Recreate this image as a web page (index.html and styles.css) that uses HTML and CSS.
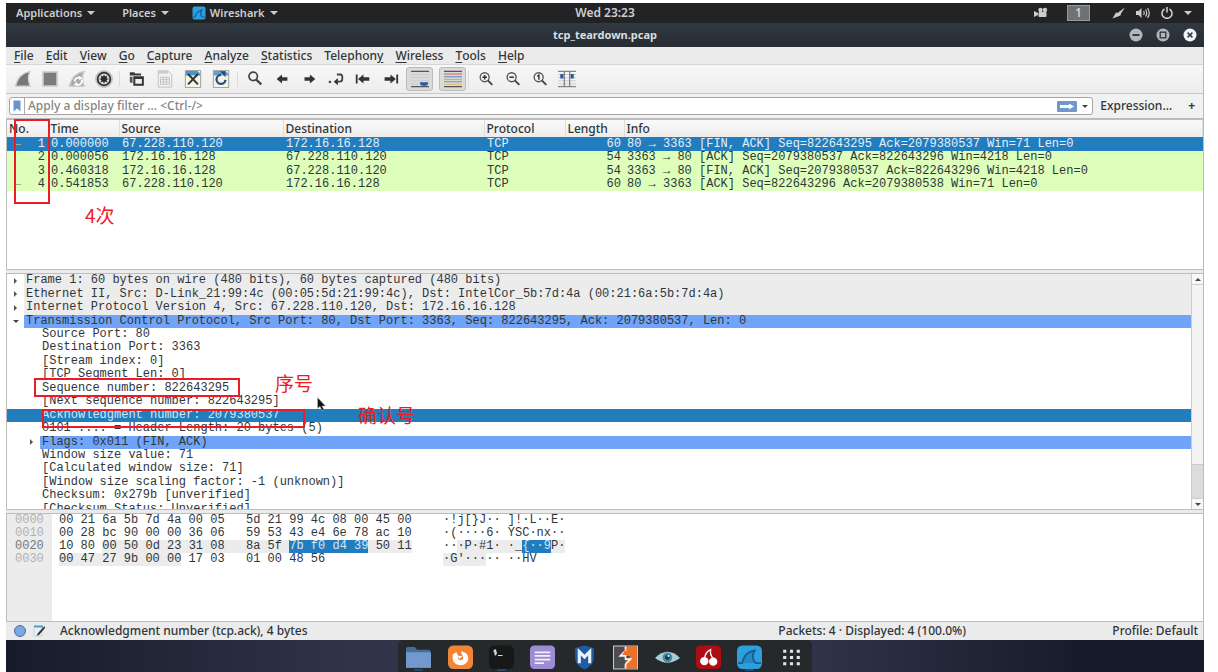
FILE: index.html
```html
<!DOCTYPE html>
<html lang="en">
<head>
<meta charset="utf-8">
<title>tcp_teardown.pcap</title>
<link rel="stylesheet" href="styles.css">
</head>
<body>
<div class="screen">
  <header class="topbar">
    <nav class="topbar-left">
      <button>Applications<i class="caret"></i></button>
      <button>Places<i class="caret"></i></button>
      <button><svg class="app-icon" viewBox="0 0 14 14"><rect x="0.5" y="0.5" width="13" height="13" rx="2" fill="#2b9fe0"/><path d="M1 11h2c1-4 3-6 7-7-1.500 2-1.500 5 0 7h3" fill="none" stroke="#145c8f" stroke-width="1.200"/></svg>Wireshark<i class="caret"></i></button>
    </nav>
    <span class="clock">Wed 23:23</span>
    <div class="topbar-right">
      <svg class="tray" viewBox="0 0 14 12"><circle cx="6.500" cy="3" r="2.200"/><circle cx="11" cy="3" r="2.200"/><rect x="4.500" y="5" width="8" height="5" rx="1"/><path d="M0 4l4 2v2L0 10z"/></svg>
      <span class="workspace">1</span>
      <svg class="tray" viewBox="0 0 14 12"><path d="M0.500 11.500L4 5.500l1.500 0.500L13 0.500 9 6.500 8.500 8.500z"/></svg>
      <svg class="tray" viewBox="0 0 14 12"><path d="M0 4h2.500l3-3v10l-3-3H0z"/><path d="M7.500 4q1.500 2 0 4M9.500 2.500q2.500 3.500 0 7M11.500 1q3.500 5 0 10" fill="none" stroke="#ccc" stroke-width="1.200"/></svg>
      <svg class="tray" viewBox="0 0 14 12"><path d="M4.500 2a5 5 0 1 0 5 0M7 0v5.500" fill="none" stroke="#d4d4d4" stroke-width="1.500"/></svg>
      <i class="caret"></i>
    </div>
  </header>
  <div class="titlebar">
    <span></span>
    <h1>tcp_teardown.pcap</h1>
    <div class="window-buttons">
      <button aria-label="Minimize"><svg viewBox="0 0 14 14"><circle cx="7" cy="7" r="6.500" fill="#b4b6b8"/><path d="M3.500 7h7" stroke="#333a42" stroke-width="2"/></svg></button>
      <button aria-label="Maximize"><svg viewBox="0 0 14 14"><circle cx="7" cy="7" r="6.500" fill="#b4b6b8"/><rect x="4.200" y="4.200" width="5.600" height="5.600" fill="none" stroke="#333a42" stroke-width="1.400"/></svg></button>
      <button aria-label="Close"><svg viewBox="0 0 14 14"><circle cx="7" cy="7" r="6.500" fill="#f4f5f6"/><path d="M4.600 4.600l4.800 4.800M9.400 4.600l-4.800 4.800" stroke="#333a42" stroke-width="1.500"/></svg></button>
    </div>
  </div>
  <main class="app">
    <nav class="menubar">
      <button><u>F</u>ile</button><button><u>E</u>dit</button><button><u>V</u>iew</button><button><u>G</u>o</button><button><u>C</u>apture</button><button><u>A</u>nalyze</button><button><u>S</u>tatistics</button><button>Telephon<u>y</u></button><button><u>W</u>ireless</button><button><u>T</u>ools</button><button><u>H</u>elp</button>
    </nav>
    <div class="toolbar">
      <div class="tools">
        <button aria-label="Start capture"><svg viewBox="0 0 20 20"><path d="M1.500 18C4 8 9 3 18 1.500 15.500 6 15.500 12 18 18z" fill="#777" stroke="#d2d2d2" stroke-width="1.500"/></svg></button>
        <button aria-label="Stop capture"><svg viewBox="0 0 20 20"><rect x="1" y="1" width="18" height="18" fill="#d4d4d4"/><rect x="3" y="3" width="14" height="14" fill="#7c7c7c"/></svg></button>
        <button aria-label="Restart capture"><svg viewBox="0 0 20 20"><path d="M1.500 18C4 8 9 3 18 1.500 15.500 6 15.500 12 18 18z" fill="#a9a9a9" stroke="#ccc" stroke-width="1.500"/><path d="M7.500 13a4 4 0 0 1 6-4M15 10.500a4 4 0 0 1-6 5" fill="none" stroke="#fff" stroke-width="2"/><path d="M12 6.500l4 2-3.500 3zM10.500 18l-4-2 3.500-3z" fill="#fff"/></svg></button>
        <button aria-label="Capture options"><svg viewBox="0 0 20 20"><circle cx="10" cy="10" r="10" fill="#c4c4c4"/><circle cx="10" cy="10" r="7" fill="#e6e6e6" stroke="#333" stroke-width="2"/><circle cx="10" cy="10" r="3.400" fill="#2d2d2d"/><path d="M10 5v10M5 10h10M6.500 6.500l7 7M13.500 6.500l-7 7" stroke="#2d2d2d" stroke-width="1.200"/></svg></button>
      </div>
      <i class="sep"></i>
      <div class="tools wide">
        <button aria-label="Open file"><svg viewBox="0 0 20 20"><path d="M2 2.500h5l1 1.500h6.500V6H2z" fill="#3b3b3b"/><path d="M2 7.500h3v7H3.500L2 13z" fill="#555"/><path d="M7 8h9.500v8.500H7z" fill="#f2f2f2" stroke="#333" stroke-width="2.200"/><path d="M7 9h9.500" stroke="#333" stroke-width="2"/></svg></button>
        <button aria-label="Save file"><svg viewBox="0 0 20 20"><path d="M2.500 1h11l4 4v14h-15z" fill="#f2f2f2" stroke="#bbb"/><path d="M2.500 1h11v3h-11z" fill="#ccc"/><path d="M5 8h10v8H5zM5 10.700h10M5 13.300h10M8.300 8v8M11.700 8v8" fill="none" stroke="#c2c2c2"/></svg></button>
        <button aria-label="Close file"><svg viewBox="0 0 20 20"><path d="M1.500 0.500h17v19h-17z" fill="#f4f5e4" stroke="#999"/><path d="M2 1h13l3 3v2H2z" fill="#4a96cc"/><path d="M4.500 4.500l11 11.500M15.500 4.500L4.500 16" stroke="#30363c" stroke-width="2.200"/></svg></button>
        <button aria-label="Reload file"><svg viewBox="0 0 20 20"><path d="M1.500 0.500h17v19h-17z" fill="#f4f5e4" stroke="#999"/><path d="M2 1h13l3 3v2H2z" fill="#5ba2d4"/><path d="M15 11a5 5 0 1 1-5-5.500" fill="none" stroke="#2c4c80" stroke-width="2.500"/><path d="M9 1.500h6V8z" fill="#2c4c80"/></svg></button>
      </div>
      <i class="sep"></i>
      <div class="tools">
        <button aria-label="Find packet"><svg viewBox="0 0 20 20"><circle cx="8" cy="7" r="4.700" fill="none" stroke="#444" stroke-width="1.900"/><path d="M11 10.500l6 5.500" stroke="#444" stroke-width="2.500"/></svg></button>
        <button aria-label="Go back"><svg viewBox="0 0 20 20"><path d="M4 10l6-5v3h6v4h-6v3z" fill="#333"/></svg></button>
        <button aria-label="Go forward"><svg viewBox="0 0 20 20"><path d="M17 10l-6-5v3H5v4h6v3z" fill="#333"/></svg></button>
        <button aria-label="Go to packet"><svg viewBox="0 0 20 20"><path d="M11 5h4q2 0 2 3v2q0 3-3 3h-4" fill="none" stroke="#444" stroke-width="2"/><path d="M7.500 13L12 9v8z" fill="#333"/><path d="M2 12h2.500v2.500H2z" fill="#444"/></svg></button>
        <button aria-label="First packet"><svg viewBox="0 0 20 20"><path d="M2 5h2v10H2z" fill="#333"/><path d="M4.500 10l6-5v3H17v4h-6.500v3z" fill="#333"/></svg></button>
        <button aria-label="Last packet"><svg viewBox="0 0 20 20"><path d="M17 5h2v10h-2z" fill="#333"/><path d="M16.500 10l-6-5v3H4v4h6.500v3z" fill="#333"/></svg></button>
        <button class="pressed" aria-label="Auto scroll"><svg viewBox="0 0 20 20"><path d="M0 1.500h20M0 18.500h20" stroke="#555" stroke-width="1.300"/><path d="M0 5h20M0 8.500h20M0 12h20M0 15.500h20" stroke="#c9c9c9"/><path d="M10 13.500h9v2l-2 2h-5l-2-2z" fill="#2b58a0"/></svg></button>
      </div>
      <div class="tools">
        <button class="pressed" aria-label="Colorize"><svg viewBox="0 0 20 20"><path d="M0 1.500h20M0 18.500h20" stroke="#555" stroke-width="1.300"/><path d="M0 4.500h20" stroke="#dc7575" stroke-width="1.400"/><path d="M0 7.500h20" stroke="#7b90c9" stroke-width="1.400"/><path d="M0 10.500h20" stroke="#8ccf80" stroke-width="1.400"/><path d="M0 13h20" stroke="#a090c9" stroke-width="1.400"/><path d="M0 16h20" stroke="#dfc170" stroke-width="1.400"/></svg></button>
      </div>
      <i class="sep"></i>
      <div class="tools">
        <button aria-label="Zoom in"><svg viewBox="0 0 20 20"><circle cx="8.500" cy="8" r="5" fill="none" stroke="#555" stroke-width="1.500"/><path d="M12 11.500l5 5" stroke="#444" stroke-width="2.200"/><path d="M6 8h5M8.500 5.500v5" stroke="#333" stroke-width="1.700"/></svg></button>
        <button aria-label="Zoom out"><svg viewBox="0 0 20 20"><circle cx="8.500" cy="8" r="5" fill="none" stroke="#555" stroke-width="1.500"/><path d="M12 11.500l5 5" stroke="#444" stroke-width="2.200"/><path d="M6 8h5" stroke="#333" stroke-width="1.700"/></svg></button>
        <button aria-label="Normal size"><svg viewBox="0 0 20 20"><circle cx="8.500" cy="8" r="5" fill="none" stroke="#555" stroke-width="1.500"/><path d="M12 11.500l5 5" stroke="#444" stroke-width="2.200"/><path d="M7 7l1.800-1.200v5" fill="none" stroke="#333" stroke-width="1.600"/></svg></button>
        <button aria-label="Resize columns"><svg viewBox="0 0 20 20"><path d="M0 1.500h20M0 18.500h20" stroke="#888" stroke-width="1.500"/><path d="M0 5h20M0 8.500h20M0 12h20M0 15.500h20" stroke="#ccc"/><path d="M7 1v18M13 1v18" stroke="#777" stroke-width="1.300"/><path d="M2.500 4.500h3.500v5H2.500zM14 4.500h3.500v5H14z" fill="#2b58a0"/></svg></button>
      </div>
    </div>
    <div class="filterbar">
      <div class="filter">
        <button class="bookmark" aria-label="Bookmark"><svg viewBox="0 0 8 12"><path d="M0.500 0.500h7v11L4 8.500l-3.500 3z" fill="#6b94cf"/></svg></button>
        <input type="text" aria-label="Display filter" placeholder="Apply a display filter … &lt;Ctrl-/&gt;">
        <button class="apply" aria-label="Apply filter"><svg viewBox="0 0 20 11"><rect width="20" height="11" rx="1" fill="#7297cd"/><path d="M3 4h9V2.500l5 3-5 3V7H3z" fill="#fff"/></svg></button>
        <button class="history" aria-label="Filter history"><i class="caret dark"></i></button>
      </div>
      <button class="expression">Expression…</button>
      <button class="add">+</button>
    </div>
    <section class="pane packets">
      <table>
        <colgroup><col class="c-no"><col class="c-time"><col class="c-src"><col class="c-dst"><col class="c-proto"><col class="c-len"><col></colgroup>
        <thead><tr><th>No.</th><th>Time</th><th>Source</th><th>Destination</th><th>Protocol</th><th>Length</th><th>Info</th></tr></thead>
        <tbody>
          <tr class="selected"><td class="num mark">1</td><td>0.000000</td><td>67.228.110.120</td><td>172.16.16.128</td><td>TCP</td><td class="num">60</td><td>80 → 3363 [FIN, ACK] Seq=822643295 Ack=2079380537 Win=71 Len=0</td></tr>
          <tr><td class="num">2</td><td>0.000056</td><td>172.16.16.128</td><td>67.228.110.120</td><td>TCP</td><td class="num">54</td><td>3363 → 80 [ACK] Seq=2079380537 Ack=822643296 Win=4218 Len=0</td></tr>
          <tr><td class="num">3</td><td>0.460318</td><td>172.16.16.128</td><td>67.228.110.120</td><td>TCP</td><td class="num">54</td><td>3363 → 80 [FIN, ACK] Seq=2079380537 Ack=822643296 Win=4218 Len=0</td></tr>
          <tr><td class="num mark">4</td><td>0.541853</td><td>67.228.110.120</td><td>172.16.16.128</td><td>TCP</td><td class="num">60</td><td>80 → 3363 [ACK] Seq=822643296 Ack=2079380538 Win=71 Len=0</td></tr>
        </tbody>
      </table>
    </section>
    <section class="pane details">
      <ul class="tree">
        <li class="top"><i class="closed"></i><span>Frame 1: 60 bytes on wire (480 bits), 60 bytes captured (480 bits)</span></li>
        <li class="top"><i class="closed"></i><span>Ethernet II, Src: D-Link_21:99:4c (00:05:5d:21:99:4c), Dst: IntelCor_5b:7d:4a (00:21:6a:5b:7d:4a)</span></li>
        <li class="top"><i class="closed"></i><span>Internet Protocol Version 4, Src: 67.228.110.120, Dst: 172.16.16.128</span></li>
        <li class="blue"><i class="open"></i><span>Transmission Control Protocol, Src Port: 80, Dst Port: 3363, Seq: 822643295, Ack: 2079380537, Len: 0</span></li>
        <li class="child"><i></i><span>Source Port: 80</span></li>
        <li class="child"><i></i><span>Destination Port: 3363</span></li>
        <li class="child"><i></i><span>[Stream index: 0]</span></li>
        <li class="child"><i></i><span>[TCP Segment Len: 0]</span></li>
        <li class="child"><i></i><span>Sequence number: 822643295</span></li>
        <li class="child"><i></i><span>[Next sequence number: 822643295]</span></li>
        <li class="child current"><i></i><span>Acknowledgment number: 2079380537</span></li>
        <li class="child"><i></i><span>0101 .... = Header Length: 20 bytes (5)</span></li>
        <li class="child blue"><i class="closed"></i><span>Flags: 0x011 (FIN, ACK)</span></li>
        <li class="child"><i></i><span>Window size value: 71</span></li>
        <li class="child"><i></i><span>[Calculated window size: 71]</span></li>
        <li class="child"><i></i><span>[Window size scaling factor: -1 (unknown)]</span></li>
        <li class="child"><i></i><span>Checksum: 0x279b [unverified]</span></li>
        <li class="child"><i></i><span>[Checksum Status: Unverified]</span></li>
      </ul>
      <div class="scrollbar">
        <button aria-label="Scroll up"><i class="caret dark up"></i></button>
        <div class="thumb"></div>
        <div class="trough"></div>
        <button aria-label="Scroll down"><i class="caret dark"></i></button>
      </div>
    </section>
    <section class="pane bytes">
      <div class="offsets"><span>0000</span><span>0010</span><span class="on">0020</span><span>0030</span></div>
      <div class="hex">
        <div class="row"><span>00 21 6a 5b 7d 4a 00 05</span><span>5d 21 99 4c 08 00 45 00</span><span>·!j[}J·· ]!·L··E·</span></div>
        <div class="row"><span>00 28 bc 90 00 00 36 06</span><span>59 53 43 e4 6e 78 ac 10</span><span>·(····6· YSC·nx··</span></div>
        <div class="row"><span>10 80 <mark class="fill">00 50 0d 23 31 08</mark></span><span><mark>8a 5f </mark><mark class="sel">7b f0 d4 39</mark><mark> 50 11</mark></span><span>··<mark>·P·#1· ·_</mark><mark class="sel">{··9</mark><mark>P·</mark></span></div>
        <div class="row"><span><mark>00 47 27 9b 00 00</mark> 17 03</span><span>01 00 48 56</span><span><mark>·G'···</mark>·· ··HV</span></div>
      </div>
    </section>
    <footer class="status">
      <button aria-label="Expert information"><svg viewBox="0 0 14 14"><circle cx="7" cy="7" r="5.500" fill="#7da6e6" stroke="#4f6f9f"/></svg></button>
      <button aria-label="Capture comments"><svg viewBox="0 0 14 14"><path d="M2 2h8v10H2z" fill="#e8eef2" stroke="#c5d5df"/><path d="M2 1.500h9v2H2z" fill="#49a0d0"/><path d="M12.500 2L6 9l-1.500 3 3-1.500L13 4z" fill="#333"/></svg></button>
      <span class="field">Acknowledgment number (tcp.ack), 4 bytes</span>
      <span class="counts">Packets: 4 · Displayed: 4 (100.0%)</span>
      <span class="profile">Profile: Default</span>
    </footer>
  </main>
  <div class="desktop">
    <nav class="dock">
      <button aria-label="Files"><svg viewBox="0 0 24 24"><path d="M0 3q0-1.500 1.500-1.500h7L10.500 4H22q1.500 0 1.500 1.500V12H0z" fill="#466f96"/><rect y="6.500" width="24" height="15" fill="#7199ce"/><rect x="8" y="23" width="8" height="1" fill="#1c70b8"/></svg></button>
      <button aria-label="Firefox"><svg viewBox="0 0 24 24"><rect width="24" height="22.500" rx="5" fill="#f28436"/><path d="M4.500 8.500L8 6.500l1.500 3 4-.5-1-3.500q7 1.500 7 7a7.500 6.500 0 0 1-15 0z" fill="#fff"/><circle cx="12" cy="11.500" r="2.600" fill="#f28436"/><path d="M9 10l5 0-3 3z" fill="#fff"/></svg></button>
      <button aria-label="Terminal"><svg viewBox="0 0 24 24"><rect width="24" height="22.500" rx="5" fill="#171918"/><path d="M7 4.500H5v1.800h2v1.800H5M6 3.500v6M8.500 9.500H13" fill="none" stroke="#ddd" stroke-width="1"/><rect x="8" y="23" width="8" height="1" fill="#1c70b8"/></svg></button>
      <button aria-label="Text editor"><svg viewBox="0 0 24 24"><rect width="24" height="22.500" rx="4" fill="#9d8bd3"/><path d="M4.500 6.500h15M4.500 10h15M4.500 13.500h15M4.500 17h9" stroke="#f2effa" stroke-width="1.700"/></svg></button>
      <button aria-label="Metasploit"><svg viewBox="0 0 24 24"><path d="M3 2.500L12 0l9 2.500v11Q19.500 20 12 23 4.500 20 3 13.500z" fill="#1e5ca5"/><path d="M7 17V6l5 5 5-5v11" fill="none" stroke="#e8f1fa" stroke-width="3"/></svg></button>
      <button aria-label="Burp Suite"><svg viewBox="0 0 24 24"><rect x="0.500" y="0.500" width="23" height="22" fill="#4d4d4f" stroke="#c9c9c9"/><path d="M12 1h11v21H12v-7l5-5h-5z" fill="#ee7127"/><path d="M12 1v4L7 10h5v3h5l-5 5v4" fill="none" stroke="#f4f4f4" stroke-width="1.600"/><path d="M12 3v6H9z" fill="#ee7127"/></svg></button>
      <button aria-label="Zenmap"><svg viewBox="0 0 26 24"><path d="M0 12Q13-1 26 12 13 22 0 12z" fill="#a8ccd9"/><circle cx="13" cy="11.500" r="5" fill="#4d879c"/><circle cx="13" cy="11.500" r="2.500" fill="#143c50"/><circle cx="14" cy="10" r="1" fill="#fff"/></svg></button>
      <button aria-label="CherryTree"><svg viewBox="0 0 24 24"><rect width="24" height="22.500" rx="4" fill="#ad0e14"/><path d="M8 13Q9 6 14 4q-1 5 3 9" fill="none" stroke="#fff" stroke-width="1.300"/><circle cx="8" cy="15" r="4" fill="#fff"/><circle cx="16.500" cy="15.500" r="4" fill="#fff"/></svg></button>
      <button aria-label="Wireshark"><svg viewBox="0 0 24 24"><rect width="24" height="22.500" rx="5" fill="#2c9fdc"/><path d="M1 17h4C7 9 10 6 17 5c-3 4-2 9 1 12h5" fill="#258ac4" stroke="#165e8b" stroke-width="1.700"/><rect x="8" y="23" width="8" height="1" fill="#1c70b8"/></svg></button>
      <button aria-label="Show applications"><svg viewBox="0 0 24 24"><path d="M4 4h3v3H4zM10.500 4h3v3h-3zM17 4h3v3h-3zM4 10h3v3H4zM10.500 10h3v3h-3zM17 10h3v3h-3zM4 16h3v3H4zM10.500 16h3v3h-3zM17 16h3v3h-3z" fill="#e4e6e6"/></svg></button>
    </nav>
  </div>
</div>
<div class="box box-no"></div>
<div class="box box-seq"></div>
<div class="box box-ack"></div>
<span class="note note-count">4次</span>
<span class="note note-seq">序号</span>
<span class="note note-ack">确认号</span>
<svg class="pointer" viewBox="0 0 9 14"><path d="M0.500 0.500v11l2.500-2 2 4 2-1-2-3.500h3.500z" fill="#111" stroke="#bbb" stroke-width="0.600"/></svg>
</body>
</html>
```
FILE: styles.css
```css
* { box-sizing: border-box; }
body {
  margin: 0;
  background: #fff;
  color: #30363a;
  font: 500 12px/16px "Noto Sans", "Noto Sans CJK SC", sans-serif;
}
button {
  margin: 0;
  padding: 0;
  border: 0;
  background: none;
  color: inherit;
  font: inherit;
  display: inline-flex;
  align-items: center;
  justify-content: center;
}
svg { display: block; }
.screen {
  height: 100vh;
  padding: 3px 14px 0 6px;
  display: flex;
  flex-direction: column;
}
.caret {
  border: 4px solid transparent;
  border-top-color: #ccc;
  border-bottom: 0;
  margin-left: 5px;
}
.caret.dark { border-width: 3px; border-bottom: 0; border-top-color: #444; margin: 0; }
.caret.up { transform: rotate(180deg); }

.topbar {
  display: grid;
  grid-template-columns: 1fr auto 1fr;
  align-items: center;
  height: 20px;
  background: #222325;
  color: #cfcfcf;
  font-weight: 600;
}
.topbar-left { display: flex; gap: 27px; padding-left: 10px; font-size: 11px; }
.topbar-left > button:last-child { margin-left: -4px; }
.topbar-left .app-icon { width: 14px; height: 14px; margin-right: 4px; }
.topbar-right { display: flex; align-items: center; justify-content: flex-end; gap: 10px; padding-right: 12px; }
.tray { width: 14px; height: 12px; fill: #ccc; }
.topbar-right .caret { margin: 0; }
.workspace {
  width: 23px;
  height: 16px;
  margin: 0 12px 0 9px;
  border: 1px solid #999;
  background: #707172;
  text-align: center;
  line-height: 14px;
}
.titlebar {
  display: grid;
  grid-template-columns: 1fr auto 1fr;
  align-items: center;
  height: 24px;
  background: linear-gradient(#303840, #282d34);
  color: #dcdcdc;
}
.titlebar h1 { margin: 0; font-size: 11px; font-weight: 700; }
.window-buttons { display: flex; justify-content: flex-end; gap: 13px; padding-right: 7px; }
.window-buttons svg { width: 14px; height: 14px; }

.app { flex: 1; min-height: 0; display: flex; flex-direction: column; background: #ebebeb; border-right: 1px solid #bbb; }
.menubar { display: flex; gap: 12px; height: 18px; padding-left: 8px; border-bottom: 1px solid #d5d5d5; }
.menubar u { text-underline-offset: 2px; }
.toolbar {
  display: flex;
  align-items: center;
  height: 29px;
  padding-left: 3px;
  background: linear-gradient(#f7f7f7, #ededed);
  border-bottom: 1px solid #c6c6c6;
}
.menubar, .toolbar, .filterbar, .status, .topbar, .titlebar, .desktop { flex: none; }
.tools { display: flex; }
.tools button { width: 27px; height: 24px; }
.tools.wide button { width: 28px; }
.tools svg { width: 18px; height: 18px; }
.tools .pressed { margin-left: 3px; border: 1px solid #bbb; border-radius: 3px; background: #dadada; }
.tools + .tools { margin-left: 3px; }
.sep { width: 1px; height: 16px; margin: 0 3px 0 2px; background: #dcdcdc; }
.filterbar { display: flex; align-items: center; height: 25px; padding: 0 8px 0 3px; background: #f1f1f1; border-bottom: 1px solid #b9b9b9; }
.filter { flex: 1; display: flex; align-items: center; height: 18px; background: #fff; border: 1px solid #a5a5a5; border-radius: 3px; }
.filter .bookmark { width: 15px; height: 16px; border-right: 1px solid #aaa; }
.bookmark svg { width: 8px; height: 12px; }
.filter input { flex: 1; min-width: 0; height: 16px; border: 0; padding: 0 3px; background: none; font: inherit; outline: 0; }
.filter input::placeholder { color: #858585; opacity: 1; }
.apply svg { width: 20px; height: 11px; }
.history { width: 15px; height: 16px; }
.expression { margin: 0 10px 0 7px; padding-right: 6px; height: 18px; }
.add { font-weight: 700; }

.pane { background: #fff; border: 1px solid #bdbdbd; border-right: 0; overflow: hidden; min-height: 0; margin-bottom: 3px; }
.packets { flex: 151 0 0; }
.packets table { width: 100%; table-layout: fixed; border-collapse: collapse; }
.c-no { width: 41px; }
.c-time { width: 71px; }
.c-src { width: 164px; }
.c-dst { width: 201px; }
.c-proto { width: 81px; }
.c-len { width: 59px; }
.packets th {
  height: 17px;
  padding: 0 2px;
  background: linear-gradient(#fafafa, #ececec);
  border-right: 1px solid #ddd;
  text-align: left;
  font-weight: 500;
  line-height: 16px;
}
.packets td {
  height: 14px;
  padding: 0 3px;
  font: 12px/13px "Liberation Mono", monospace;
  white-space: pre;
  overflow: hidden;
}
.packets tr:nth-child(even) td { height: 13px; }
.packets tbody tr { background: #ddffbb; }
.packets tbody .selected { background: #217dbe; color: #e5f0f8; }
.packets .num { text-align: right; }
.mark::before { content: ""; float: left; width: 6px; height: 1px; margin: 6px 0 0 5px; background: #9fae96; }

.details { flex: 238 0 0; display: flex; }
.tree {
  flex: 1;
  min-width: 0;
  height: 242px;
  margin: 0;
  padding: 0;
  list-style: none;
  display: grid;
  grid-auto-rows: 1fr;
  font: 12px/13px "Liberation Mono", monospace;
  white-space: pre;
}
.tree li { display: flex; min-height: 0; }
.tree i { flex: none; width: 17px; display: flex; align-items: center; justify-content: center; }
.tree .child { padding-left: 16px; }
.tree span { flex: 1; padding-left: 2px; }
.tree .top span { background: #ececec; }
.tree .blue span { background: #70a4f8; }
.tree .current { background: #217dbe; color: #d5e7f4; }
.tree .closed::before { content: ""; border: 3px solid transparent; border-left-color: #555; border-right: 0; }
.tree .open::before { content: ""; border: 3px solid transparent; border-top-color: #444; border-bottom: 0; }
.scrollbar { width: 12px; display: flex; flex-direction: column; border-left: 1px solid #ccc; background: #f8f8f8; }
.scrollbar button { height: 10px; }
.scrollbar .thumb { flex: 182; border: solid #ccc; border-width: 1px 0; background: #f4f4f4; }
.scrollbar .trough { flex: 34; background: #dcdcdc; border-bottom: 1px solid #ccc; }

.bytes { flex: 108 0 0; display: flex; font: 12px/13px "Liberation Mono", monospace; margin-bottom: 0; }
.offsets { width: 45px; padding-left: 8px; background: #ececec; color: #b2b2b2; display: flex; flex-direction: column; }
.offsets .on { color: #777; }
.hex { padding-left: 7px; }
.hex .row { display: grid; grid-template-columns: 187px 197px auto; white-space: pre; }
.hex .row > span { display: flex; }
.hex mark { background: #ececec; color: inherit; }
.hex mark.fill { flex: 1; }
.hex mark.sel { background: #217dbe; color: #d5e7f4; }

.status { display: flex; align-items: center; height: 18px; padding: 0 5px 0 7px; }
.status svg { width: 14px; height: 14px; }
.status button + button { margin-left: 5px; }
.status .field { flex: 1; padding-left: 14px; }
.status .counts { width: 334px; }

.desktop { height: 32px; display: flex; justify-content: center; background: linear-gradient(90deg, #171b29, #30354a 30%, #30354a 66%, #171b29 90%); }
.dock { width: 414px; padding-top: 5px; display: grid; grid-template-columns: repeat(10, 1fr); background: #25292b; border-radius: 5px 5px 0 0; }
.dock button { align-items: flex-start; }
.dock svg { width: 25px; height: 26px; }

.box { position: absolute; border: 2px solid #ed1c24; }
.box-no { left: 14px; top: 119px; width: 36px; height: 85px; }
.box-seq { left: 34px; top: 378px; width: 206px; height: 19px; }
.box-ack { left: 42px; top: 409px; width: 263px; height: 19px; }
.note { position: absolute; color: #ed1c24; font: 19px/24px "Noto Sans CJK SC", sans-serif; }
.note-count { left: 85px; top: 203px; }
.note-seq { left: 275px; top: 371px; }
.note-ack { left: 358px; top: 403px; }
.pointer { position: absolute; left: 317px; top: 397px; width: 9px; height: 14px; }
```
